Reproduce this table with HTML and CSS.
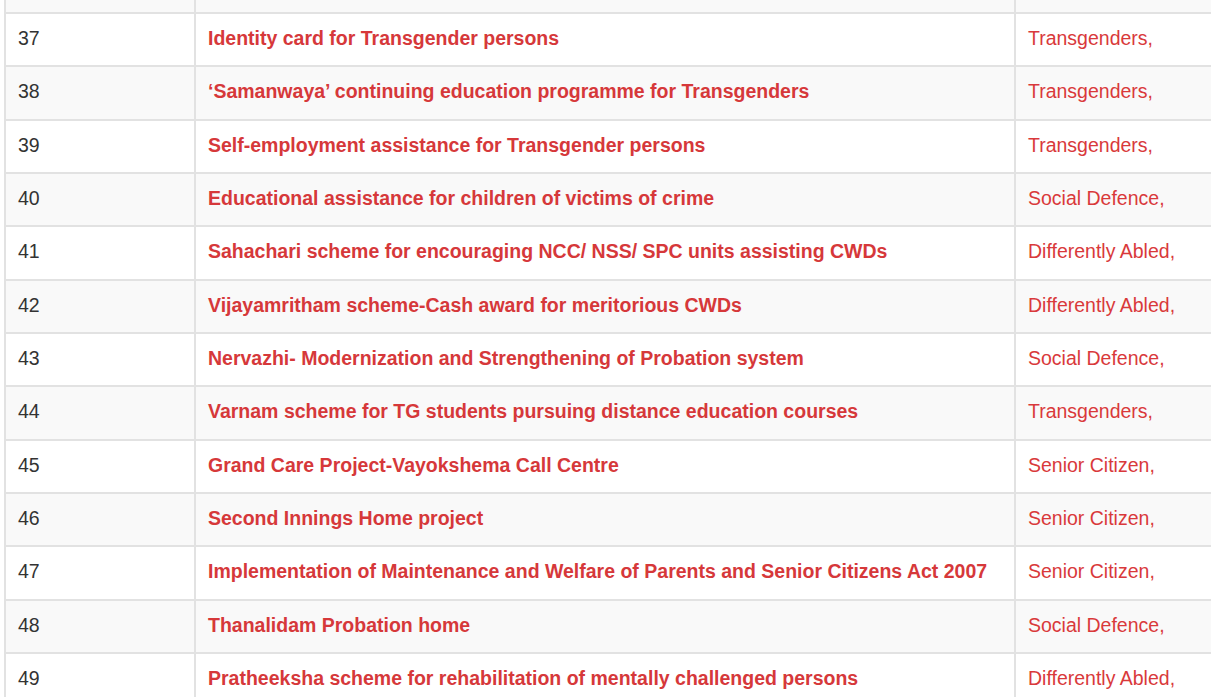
FILE: index.html
```html
<!DOCTYPE html>
<html>
<head>
<meta charset="utf-8">
<link rel="stylesheet" href="styles.css">
</head>
<body>
<div class="wrap">
<table class="schemes">
<tbody>
<tr class="stub"><td class="num"></td><td class="name"></td><td class="cat"></td></tr>
<tr><td class="num">37</td><td class="name"><a href="#">Identity card for Transgender persons</a></td><td class="cat"><a href="#">Transgenders,</a></td></tr>
<tr><td class="num">38</td><td class="name"><a href="#">‘Samanwaya’ continuing education programme for Transgenders</a></td><td class="cat"><a href="#">Transgenders,</a></td></tr>
<tr><td class="num">39</td><td class="name"><a href="#">Self-employment assistance for Transgender persons</a></td><td class="cat"><a href="#">Transgenders,</a></td></tr>
<tr><td class="num">40</td><td class="name"><a href="#">Educational assistance for children of victims of crime</a></td><td class="cat"><a href="#">Social Defence,</a></td></tr>
<tr><td class="num">41</td><td class="name"><a href="#">Sahachari scheme for encouraging NCC/ NSS/ SPC units assisting CWDs</a></td><td class="cat"><a href="#">Differently Abled,</a></td></tr>
<tr><td class="num">42</td><td class="name"><a href="#">Vijayamritham scheme-Cash award for meritorious CWDs</a></td><td class="cat"><a href="#">Differently Abled,</a></td></tr>
<tr><td class="num">43</td><td class="name"><a href="#">Nervazhi- Modernization and Strengthening of Probation system</a></td><td class="cat"><a href="#">Social Defence,</a></td></tr>
<tr><td class="num">44</td><td class="name"><a href="#">Varnam scheme for TG students pursuing distance education courses</a></td><td class="cat"><a href="#">Transgenders,</a></td></tr>
<tr><td class="num">45</td><td class="name"><a href="#">Grand Care Project-Vayokshema Call Centre</a></td><td class="cat"><a href="#">Senior Citizen,</a></td></tr>
<tr><td class="num">46</td><td class="name"><a href="#">Second Innings Home project</a></td><td class="cat"><a href="#">Senior Citizen,</a></td></tr>
<tr><td class="num">47</td><td class="name"><a href="#">Implementation of Maintenance and Welfare of Parents and Senior Citizens Act 2007</a></td><td class="cat"><a href="#">Senior Citizen,</a></td></tr>
<tr><td class="num">48</td><td class="name"><a href="#">Thanalidam Probation home</a></td><td class="cat"><a href="#">Social Defence,</a></td></tr>
<tr><td class="num">49</td><td class="name"><a href="#">Pratheeksha scheme for rehabilitation of mentally challenged persons</a></td><td class="cat"><a href="#">Differently Abled,</a></td></tr>
</tbody>
</table>
</div>
</body>
</html>
```
FILE: styles.css
```css
html, body {
  margin: 0;
  padding: 0;
  background: #ffffff;
  overflow: hidden;
}
.wrap {
  padding-left: 4px;
  margin-top: -2px;
  width: 1400px;
}
.schemes {
  border-collapse: collapse;
  width: 1300px;
  table-layout: fixed;
  font-family: "Liberation Sans", Arial, sans-serif;
  font-size: 19.5px;
  line-height: 24px;
  color: #333333;
}
.schemes td {
  border: 2px solid #e2e2e2;
  padding: 0 12px 3px;
  height: 53.33px;
  box-sizing: border-box;
  vertical-align: middle;
}
.schemes tr:nth-child(even) td { background: #ffffff; }
.schemes tr:nth-child(odd) td { background: #f9f9f9; }
.schemes tr.stub td {
  height: 14px;
  padding: 0 12px;
}
.num { width: 190px; }
.name { width: 820px; }
.cat { width: 290px; }
.schemes a { text-decoration: none; }
.name a {
  color: #d6383a;
  font-weight: bold;
}
.cat a {
  color: #d9393b;
}
```
